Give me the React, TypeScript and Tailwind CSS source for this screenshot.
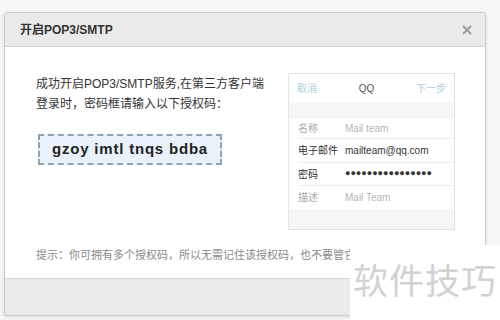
export default function App() {
  const font = { fontFamily: '"Liberation Sans", "Noto Sans CJK SC", sans-serif' };

  return (
    <div className="relative h-[320px] w-[500px] overflow-hidden bg-[#f6f7f9] pl-[4px] pt-[12px]" style={font}>
      {/* dialog */}
      <div className="flex w-[482px] flex-col rounded-t-[4px] border border-[#cdcdcd] bg-white shadow-[0_1px_4px_rgba(0,0,0,0.12)]">
        <div className="flex h-[34px] items-center justify-between rounded-t-[4px] border-b border-[#d6d6d6] bg-[#ebeaeb] pl-[15px] pr-[13px]">
          <span className="text-[12px] font-bold text-[#333]">开启POP3/SMTP</span>
          <svg className="h-[10px] w-[10px]" viewBox="0 0 10 10" fill="none" stroke="#9a9a9a" strokeWidth={1.8}>
            <path d="M1 1l8 8M9 1l-8 8" />
          </svg>
        </div>

        <div className="flex h-[231px] flex-col">
          <div className="flex">
            <div className="w-[282px] pl-[31px] pt-[27px]">
              <p className="text-[12px] leading-[20px] text-[#333]">
                成功开启POP3/SMTP服务,在第三方客户端
                <br />
                登录时，密码框请输入以下授权码：
              </p>
              <div className="ml-[2px] mt-[20px] flex h-[31px] w-[184px] items-center justify-center border-2 border-dashed border-[#8fa2b3] bg-[#e9f2fa]">
                <span className="text-[15px] font-bold tracking-[0.8px] text-[#222]">gzoy imtl tnqs bdba</span>
              </div>
            </div>

            {/* phone mock */}
            <div className="ml-[1px] mt-[26px] w-[167px] border border-[#e3e3e6] bg-[#f6f6f8] text-[10px]">
              <div className="flex h-[28px] items-center justify-between bg-white px-[8px]">
                <span className="text-[#a9cfe2]">取消</span>
                <span className="text-[#555]">QQ</span>
                <span className="text-[#a9cfe2]">下一步</span>
              </div>
              <div className="h-[17px]" />
              <div className="bg-white pl-[9px]">
                <div className="flex h-[20px] items-center border-b border-[#ececec]">
                  <span className="w-[47px] text-[#aaa]">名称</span>
                  <span className="text-[#b5b5b5]">Mail team</span>
                </div>
                <div className="flex h-[24px] items-center border-b border-[#ececec]">
                  <span className="w-[47px] text-[#333]">电子邮件</span>
                  <span className="text-[#333]">mailteam@qq.com</span>
                </div>
                <div className="flex h-[23px] items-center border-b border-[#ececec]">
                  <span className="w-[47px] text-[#333]">密码</span>
                  <span className="text-[9px] tracking-[0px] text-[#333]">●●●●●●●●●●●●●●●●</span>
                </div>
                <div className="flex h-[23px] items-center">
                  <span className="w-[47px] text-[#aaa]">描述</span>
                  <span className="text-[#b5b5b5]">Mail Team</span>
                </div>
              </div>
              <div className="h-[20px]" />
            </div>
          </div>

          <p className="mt-auto whitespace-nowrap pb-[15px] pl-[31px] text-[11px] text-[#8a8a8a]">
            提示：你可拥有多个授权码，所以无需记住该授权码，也不要管它
          </p>
        </div>

        <div className="h-[37px] border-t border-[#d6d6d6] bg-[#ebeaeb]" />
      </div>

      {/* watermark */}
      <div className="absolute bottom-0 left-[350px] right-0 top-[245px] flex items-start justify-center bg-white pt-[16px]">
        <span className="text-[35px] leading-[36px] tracking-[1px] text-[#d2d2d2]" style={{ fontFamily: '"Noto Sans CJK SC", sans-serif' }}>
          软件技巧
        </span>
      </div>
    </div>
  );
}
